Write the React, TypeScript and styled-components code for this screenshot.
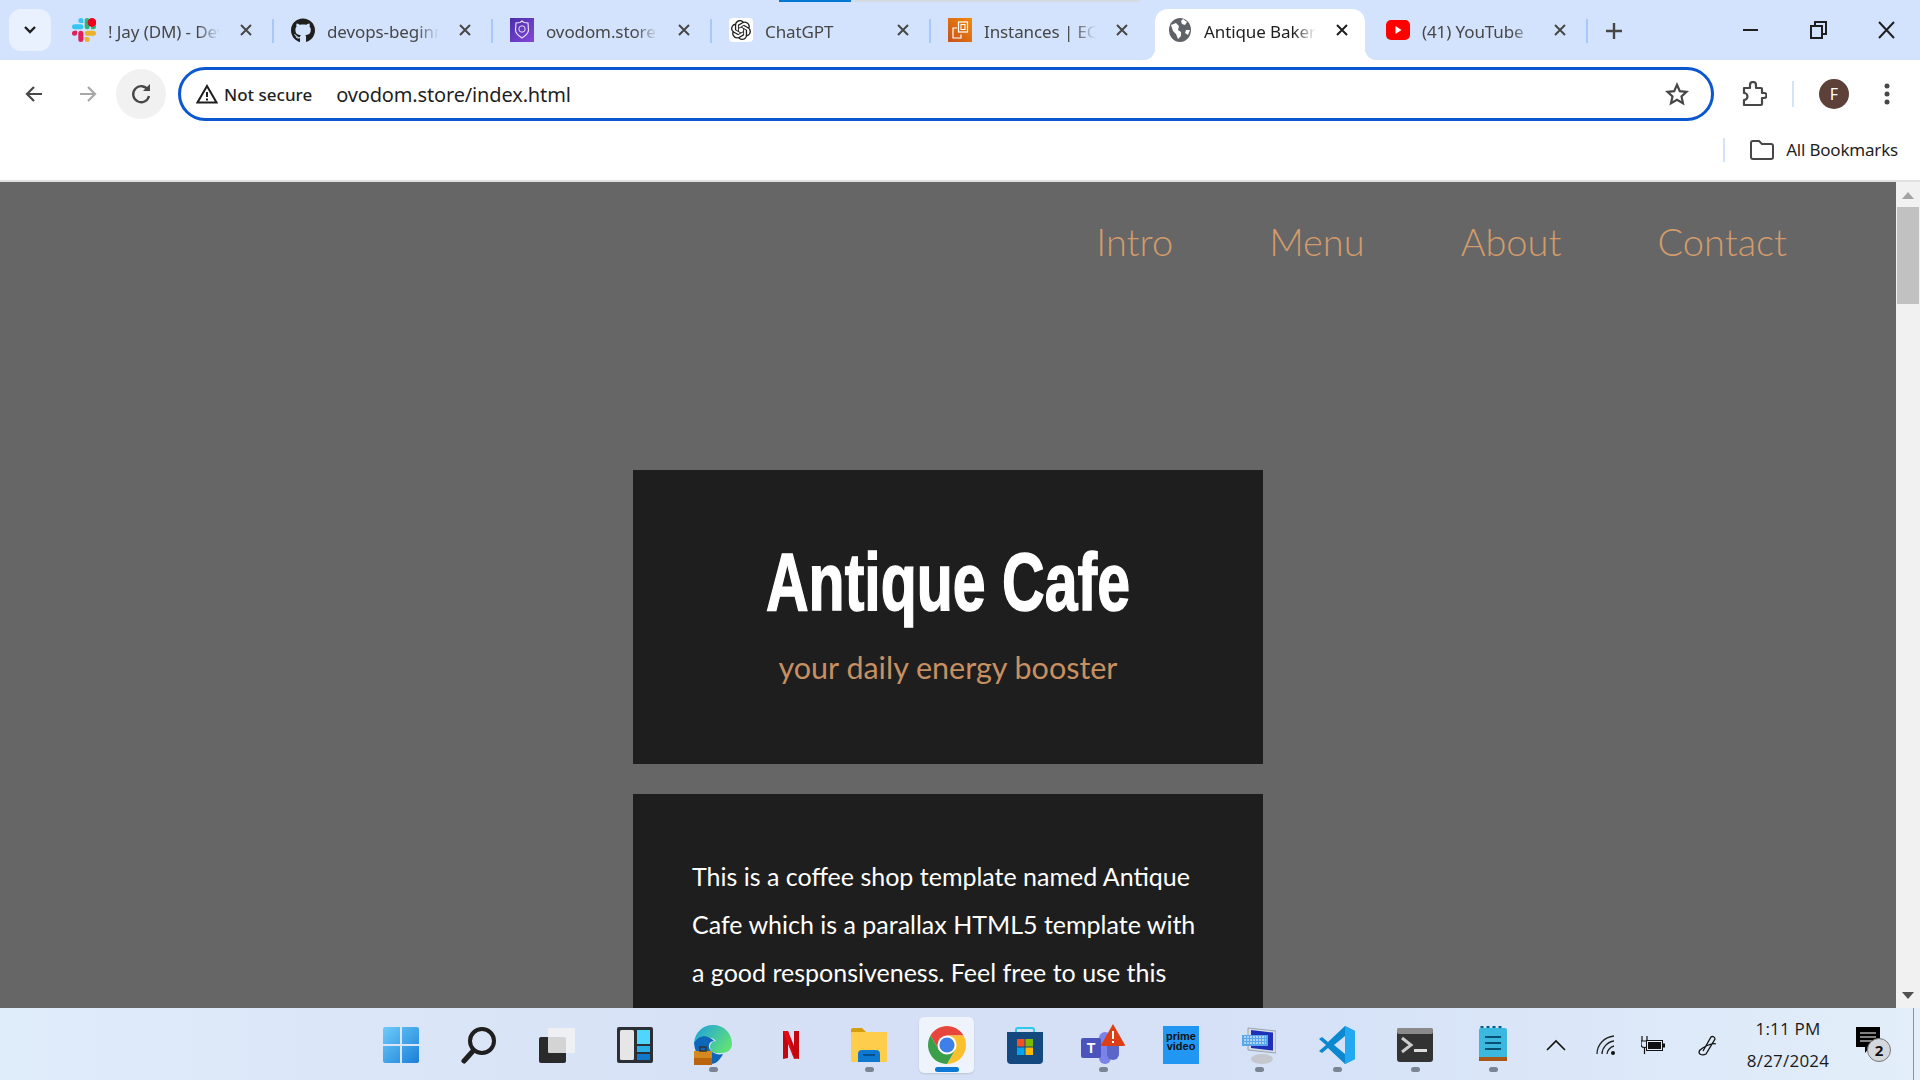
import React from 'react';
import styled, { createGlobalStyle } from 'styled-components';
import { FaGithub } from 'react-icons/fa';
import { SiOpenai } from 'react-icons/si';

const CHROME_FONT = '"Noto Sans", "Open Sans", sans-serif';
const SITE_FONT = 'Lato, "Open Sans", sans-serif';

const GlobalStyle = createGlobalStyle`
    html, body {
        margin: 0;
        height: 100%;
        overflow: hidden;
    }
    #root {
        height: 100%;
    }
`;

const Screen = styled.div`
    width: 1920px;
    height: 1080px;
    display: flex;
    flex-direction: column;
    font-family: ${CHROME_FONT};
    overflow: hidden;
    position: relative;
`;

const LoadStrip = styled.div`
    position: absolute;
    top: 0;
    left: 779px;
    width: 361px;
    height: 2px;
    background: linear-gradient(to right, #0078d4 72px, #d6dbe3 72px);
`;

const TabStrip = styled.div`
    height: 60px;
    flex: none;
    background: #d3e3fd;
    display: flex;
    align-items: flex-end;
    padding-left: 9px;
    box-sizing: border-box;
`;

const TabSearch = styled.button`
    width: 42px;
    height: 42px;
    margin: 0 4px 9px 0;
    padding: 0;
    border: 0;
    border-radius: 12px;
    background: #e9f1fe;
    display: flex;
    align-items: center;
    justify-content: center;
`;

const Tab = styled.div<{ $noSep?: boolean }>`
    width: 219px;
    height: 51px;
    flex: none;
    box-sizing: border-box;
    padding: 0 0 9px 17px;
    display: flex;
    align-items: center;
    position: relative;
    ${p =>
        !p.$noSep &&
        `&::after {
            content: '';
            position: absolute;
            right: 0;
            top: 10px;
            width: 2px;
            height: 24px;
            background: #a8c7fa;
        }`}
`;

const ActiveTab = styled(Tab)`
    width: 210px;
    margin: 0 4px 0 5px;
    padding-left: 13px;
    background: #fff;
    border-radius: 13px 13px 0 0;
    &::before,
    &::after {
        content: '';
        position: absolute;
        bottom: 0;
        width: 12px;
        height: 12px;
    }
    &::before {
        left: -12px;
        background: radial-gradient(circle at 0 0, transparent 12px, #fff 12.5px);
    }
    &::after {
        right: -12px;
        background: radial-gradient(circle at 100% 0, transparent 12px, #fff 12.5px);
    }
`;

const TabIcon = styled.span`
    width: 24px;
    height: 24px;
    flex: none;
    display: flex;
    align-items: center;
    justify-content: center;
    margin-right: 12px;
`;

const TabTitle = styled.span<{ $active?: boolean }>`
    width: 112px;
    flex: none;
    white-space: nowrap;
    overflow: hidden;
    font-size: 17px;
    line-height: 24px;
    letter-spacing: -0.1px;
    margin-top: 3px;
    color: ${p => (p.$active ? '#1f1f1f' : '#474747')};
    -webkit-mask-image: linear-gradient(to right, #000 80%, transparent 100%);
    mask-image: linear-gradient(to right, #000 80%, transparent 100%);
`;

const TabClose = styled.svg`
    width: 14px;
    height: 14px;
    margin-left: 19px;
    flex: none;
`;

const NewTab = styled.svg`
    width: 20px;
    height: 20px;
    margin: 0 0 19px 16px;
    flex: none;
`;

const WindowControls = styled.div`
    margin-left: auto;
    display: flex;
    height: 60px;
    align-items: center;
`;

const WindowButton = styled.svg`
    width: 68px;
    height: 20px;
    margin-bottom: 1px;
`;

const ToolbarArea = styled.div`
    background: #fff;
    flex: none;
    border-radius: 9px 9px 0 0;
    position: relative;
`;

const Toolbar = styled.div`
    height: 61px;
    display: flex;
    align-items: center;
    padding: 7px 0 0 24px;
    box-sizing: border-box;
`;

const NavArrow = styled.svg`
    width: 20px;
    height: 20px;
    flex: none;
    margin-right: 34px;
`;

const ReloadButton = styled.div`
    width: 50px;
    height: 50px;
    margin: 0 12px 0 -16px;
    flex: none;
    border-radius: 50%;
    background: #f1f1f1;
    display: flex;
    align-items: center;
    justify-content: center;
`;

const Omnibox = styled.div`
    width: 1536px;
    height: 54px;
    box-sizing: border-box;
    flex: none;
    border: 3px solid #0b57d0;
    border-radius: 27px;
    display: flex;
    align-items: center;
    padding: 0 22px 0 15px;
`;

const NotSecure = styled.span`
    font-size: 17px;
    font-weight: 500;
    color: #1f1f1f;
    margin-left: 6px;
`;

const UrlText = styled.span`
    font-size: 20px;
    color: #1f1f1f;
    margin-left: 24px;
    letter-spacing: -0.15px;
`;

const StarIcon = styled.svg`
    width: 24px;
    height: 24px;
    margin-left: auto;
`;

const ExtensionIcon = styled.svg`
    width: 26px;
    height: 26px;
    margin-left: 27px;
    flex: none;
`;

const ToolbarSep = styled.div`
    width: 2px;
    height: 26px;
    background: #d3e3fd;
    margin: 0 25px 0 25px;
    flex: none;
`;

const Avatar = styled.div`
    width: 30px;
    height: 30px;
    border-radius: 50%;
    background: #5d4037;
    color: #fff;
    font-size: 16px;
    display: flex;
    align-items: center;
    justify-content: center;
    flex: none;
`;

const MenuDots = styled.svg`
    width: 6px;
    height: 22px;
    margin-left: 35px;
    flex: none;
`;

const BookmarksBar = styled.div`
    height: 61px;
    display: flex;
    align-items: center;
    justify-content: flex-end;
    padding: 0 22px 2px 0;
    box-sizing: border-box;
    border-bottom: 2px solid #e1e1e1;
`;

const BookmarkSep = styled.div`
    width: 2px;
    height: 24px;
    background: #d3e3fd;
    margin-right: 25px;
`;

const BookmarkLabel = styled.span`
    font-size: 17px;
    color: #1f1f1f;
    margin-left: 12px;
    letter-spacing: -0.2px;
`;

const Viewport = styled.div`
    flex: 1;
    min-height: 0;
    display: flex;
`;

const Page = styled.main`
    flex: 1;
    background: #666;
    overflow: hidden;
`;

const SiteNav = styled.nav`
    display: flex;
    justify-content: flex-end;
    gap: 96px;
    padding: 32px 109px 0 0;
`;

const SiteNavLink = styled.a`
    font-family: ${SITE_FONT};
    font-weight: 300;
    font-size: 38px;
    line-height: 54px;
    color: #d29b6c;
`;

const Hero = styled.section`
    width: 630px;
    height: 294px;
    margin: 202px auto 30px;
    background: #1e1e1e;
    text-align: center;
    box-sizing: border-box;
    padding-top: 67px;
`;

const HeroTitle = styled.h1`
    margin: 0;
    font-family: "Liberation Sans", sans-serif;
    font-weight: 700;
    font-size: 82px;
    line-height: 90px;
    color: #fff;
    -webkit-text-stroke: 1.5px #fff;
    transform: scaleX(0.72);
`;

const HeroTagline = styled.p`
    margin: 20px 0 0;
    font-family: ${SITE_FONT};
    font-weight: 400;
    font-size: 30.5px;
    line-height: 40px;
    color: #c79063;
`;

const Intro = styled.section`
    width: 630px;
    margin: 0 auto;
    background: #1e1e1e;
    box-sizing: border-box;
    padding: 58px 50px 60px 59px;
`;

const IntroText = styled.p`
    margin: 0;
    font-family: ${SITE_FONT};
    font-weight: 400;
    font-size: 25px;
    line-height: 48px;
    color: #fff;
`;

const Scrollbar = styled.div`
    width: 24px;
    flex: none;
    background: #f1f1f1;
    display: flex;
    flex-direction: column;
    align-items: center;
`;

const ScrollArrow = styled.div<{ $down?: boolean }>`
    width: 0;
    height: 0;
    margin-top: ${p => (p.$down ? 'auto' : '10px')};
    margin-bottom: ${p => (p.$down ? '9px' : '0')};
    border-left: 6px solid transparent;
    border-right: 6px solid transparent;
    ${p => (p.$down ? 'border-top: 7px solid #505050;' : 'border-bottom: 7px solid #a3a3a3;')}
`;

const ScrollThumb = styled.div`
    width: 22px;
    height: 97px;
    margin-top: 8px;
    background: #c1c1c1;
`;

const Taskbar = styled.footer`
    height: 72px;
    flex: none;
    background: linear-gradient(to right, #dfecfa 0%, #d5dff5 45%, #d6e2f7 70%, #e3eefa 100%);
    display: flex;
    align-items: center;
    padding: 2px 0 0 362px;
    box-sizing: border-box;
    position: relative;
`;

const TaskSlot = styled.div<{ $dot?: boolean; $active?: boolean }>`
    width: 78px;
    height: 56px;
    flex: none;
    display: flex;
    align-items: center;
    justify-content: center;
    position: relative;
    ${p =>
        p.$active &&
        `&::before {
            content: '';
            position: absolute;
            left: 11px;
            right: 12px;
            top: 0;
            bottom: 0;
            background: #eef3fc;
            border-radius: 5px;
            box-shadow: 0 1px 2px rgba(0, 0, 0, 0.12);
        }
        &::after {
            content: '';
            position: absolute;
            left: 27px;
            width: 24px;
            bottom: 1px;
            height: 5px;
            border-radius: 3px;
            background: #0a78d4;
        }`}
    ${p =>
        p.$dot &&
        `&::after {
            content: '';
            position: absolute;
            left: 35px;
            width: 9px;
            bottom: 1px;
            height: 5px;
            border-radius: 3px;
            background: #7b8494;
        }`}
    & > svg {
        position: relative;
    }
`;

const Tray = styled.div`
    display: flex;
    align-items: center;
    margin-left: 14px;
    height: 100%;
`;

const TrayIcon = styled.svg<{ $gap: number }>`
    flex: none;
    margin-right: ${p => p.$gap}px;
`;

const Clock = styled.div`
    width: 124px;
    text-align: center;
    font-size: 17px;
    line-height: 32px;
    color: #1a1a1a;
    letter-spacing: 0.2px;
    font-family: "Open Sans", sans-serif;
    flex: none;
`;

const Notification = styled.div`
    position: relative;
    width: 24px;
    height: 36px;
    margin-left: 6px;
`;

const NotifyBadge = styled.span`
    position: absolute;
    left: 11px;
    top: 11px;
    width: 24px;
    height: 24px;
    box-sizing: border-box;
    border-radius: 50%;
    background: #d4d7db;
    border: 1px solid #777;
    color: #111;
    font-size: 15px;
    font-weight: 700;
    line-height: 22px;
    text-align: center;
`;

const ShowDesktop = styled.div`
    position: absolute;
    right: 6px;
    top: 0;
    bottom: 0;
    width: 1px;
    background: #8b939f;
`;

const PrimeBox = styled.div`
    width: 36px;
    height: 38px;
    background: #2196f3;
    color: #111;
    font-family: "Liberation Sans", sans-serif;
    font-weight: 700;
    font-size: 11px;
    line-height: 10px;
    text-align: center;
    padding-top: 5px;
    box-sizing: border-box;
`;

const ChatGptIcon = styled.span`
    width: 24px;
    height: 24px;
    background: #fff;
    border-radius: 4px;
    display: flex;
    align-items: center;
    justify-content: center;
`;

const SlackIcon = () => (
    <svg width="24" height="24" viewBox="0 0 24 24">
        <path
            fill="#E01E5A"
            d="M5.042 15.165a2.528 2.528 0 0 1-2.52 2.523A2.528 2.528 0 0 1 0 15.165a2.527 2.527 0 0 1 2.522-2.52h2.52v2.52zM6.313 15.165a2.527 2.527 0 0 1 2.521-2.52 2.527 2.527 0 0 1 2.521 2.52v6.313A2.528 2.528 0 0 1 8.834 24a2.528 2.528 0 0 1-2.521-2.522v-6.313z"
        />
        <path
            fill="#36C5F0"
            d="M8.834 5.042a2.528 2.528 0 0 1-2.521-2.52A2.528 2.528 0 0 1 8.834 0a2.528 2.528 0 0 1 2.521 2.522v2.52H8.834zM8.834 6.313a2.528 2.528 0 0 1 2.521 2.521 2.528 2.528 0 0 1-2.521 2.521H2.522A2.528 2.528 0 0 1 0 8.834a2.528 2.528 0 0 1 2.522-2.521h6.312z"
        />
        <path
            fill="#2EB67D"
            d="M18.956 8.834a2.528 2.528 0 0 1 2.522-2.521A2.528 2.528 0 0 1 24 8.834a2.528 2.528 0 0 1-2.522 2.521h-2.522V8.834zM17.688 8.834a2.528 2.528 0 0 1-2.523 2.521 2.527 2.527 0 0 1-2.52-2.521V2.522A2.527 2.527 0 0 1 15.165 0a2.528 2.528 0 0 1 2.523 2.522v6.312z"
        />
        <path
            fill="#ECB22E"
            d="M15.165 18.956a2.528 2.528 0 0 1 2.523 2.522A2.528 2.528 0 0 1 15.165 24a2.527 2.527 0 0 1-2.52-2.522v-2.522h2.52zM15.165 17.688a2.527 2.527 0 0 1-2.52-2.523 2.526 2.526 0 0 1 2.52-2.52h6.313A2.527 2.527 0 0 1 24 15.165a2.528 2.528 0 0 1-2.522 2.523h-6.313z"
        />
        <circle cx="20" cy="4.5" r="4.4" fill="#f0001c" />
    </svg>
);

const VpnIcon = () => (
    <svg width="24" height="24" viewBox="0 0 24 24">
        <defs>
            <linearGradient id="vpn" x1="0" y1="0" x2="1" y2="1">
                <stop offset="0" stopColor="#4a2fa8" />
                <stop offset="1" stopColor="#8446d8" />
            </linearGradient>
        </defs>
        <rect width="24" height="24" fill="url(#vpn)" />
        <path d="M12 3l2 1.500 4 .5 .5 7c0 4-3.500 6-6.500 8-3-2-6.500-4-6.500-8l.5-7 4-.5z" fill="none" stroke="#e9e0ff" strokeWidth="1.2" />
        <circle cx="12" cy="11" r="3.200" fill="none" stroke="#e9e0ff" strokeWidth="1" />
    </svg>
);

const Ec2Icon = () => (
    <svg width="24" height="24" viewBox="0 0 24 24">
        <defs>
            <linearGradient id="ec2" x1="0" y1="1" x2="1" y2="0">
                <stop offset="0" stopColor="#c8511b" />
                <stop offset="1" stopColor="#f08a0c" />
            </linearGradient>
        </defs>
        <rect width="24" height="24" fill="url(#ec2)" />
        <rect x="10.500" y="4" width="9" height="10" fill="none" stroke="#fff" strokeWidth="1.200" />
        <rect x="13" y="6.500" width="4" height="5" fill="none" stroke="#fff" strokeWidth="1" />
        <path d="M9 10H5v10h8v-3.500" fill="none" stroke="#fff" strokeWidth="1.200" />
    </svg>
);

const GlobeIcon = () => (
    <svg width="22" height="24" viewBox="0 0 22 24">
        <ellipse cx="11" cy="12" rx="11" ry="12" fill="#5f6368" />
        <path d="M2 7l5-2 3 3-1 4 3 2v4l-3 3-2-5-3-3zM14 1l4 3-2 3-3-1-1-3zM21 12l-2 5-3-2 1-3z" fill="#fff" />
    </svg>
);

const YouTubeIcon = () => (
    <svg width="24" height="20" viewBox="0 0 24 20">
        <rect width="24" height="20" rx="5" fill="#f00" />
        <path d="M9.500 6l6 4-6 4z" fill="#fff" />
    </svg>
);

const CloseGlyph = ({ color = '#474747' }: { color?: string }) => (
    <TabClose viewBox="0 0 14 14">
        <path d="M2 2l10 10M12 2L2 12" stroke={color} strokeWidth="2" fill="none" />
    </TabClose>
);

const WindowsIcon = () => (
    <svg width="36" height="36" viewBox="0 0 36 36">
        <defs>
            <linearGradient id="win" x1="0" y1="0" x2="1" y2="1">
                <stop offset="0" stopColor="#6ecbfa" />
                <stop offset="1" stopColor="#1a80d8" />
            </linearGradient>
        </defs>
        <path
            fill="url(#win)"
            d="M2 0h15v17H0V2a2 2 0 0 1 2-2zM19 0h15a2 2 0 0 1 2 2v15H19zM0 19h17v17H2a2 2 0 0 1-2-2zM19 19h17v15a2 2 0 0 1-2 2H19z"
        />
    </svg>
);

const SearchIcon = () => (
    <svg width="36" height="38" viewBox="0 0 36 38">
        <circle cx="21" cy="15" r="12" fill="none" stroke="#1f1f1f" strokeWidth="4" />
        <path d="M12 25L3 35" stroke="#1f1f1f" strokeWidth="5" strokeLinecap="round" />
    </svg>
);

const TaskViewIcon = () => (
    <svg width="36" height="36" viewBox="0 0 36 36">
        <rect x="0" y="10" width="27" height="26" rx="2" fill="#2a2a2a" />
        <rect x="9" y="1" width="27" height="25" rx="1" fill="#f2f2f2" fillOpacity="0.85" />
    </svg>
);

const WidgetsIcon = () => (
    <svg width="36" height="36" viewBox="0 0 36 36">
        <rect width="36" height="36" rx="2" fill="#2b2f36" />
        <rect x="3" y="3" width="14" height="30" rx="1.500" fill="#e6e6e6" />
        <rect x="20" y="3" width="13" height="14" fill="#4fd6ff" />
        <rect x="20" y="19" width="13" height="6" fill="#29b0e8" />
        <rect x="20" y="27" width="13" height="6" fill="#0f78cc" />
    </svg>
);

const EdgeIcon = () => (
    <svg width="38" height="40" viewBox="0 0 38 40">
        <defs>
            <linearGradient id="edge" x1="0" y1="0" x2="1" y2="0.600">
                <stop offset="0" stopColor="#1b9de2" />
                <stop offset="1" stopColor="#5fe07a" />
            </linearGradient>
        </defs>
        <path d="M0 18C1 7 9 0 19 0c11 0 19 8 19 19 0 5-4 9-10 9h-6c-4 0-6-3-6-6s2-6 6-6c-2-3-6-4-9-3-6 1-11 4-13 5z" fill="url(#edge)" />
        <path d="M0 18c3-5 9-8 14-6 3 1 5 3 6 4-5 0-7 6-3 10 3 3 8 4 12 3-3 6-7 10-12 10-9 0-16-9-17-21z" fill="#0d66b8" />
        <rect x="0" y="26" width="18" height="14" fill="#b9650f" />
        <rect x="0" y="26" width="18" height="7" fill="#d28a1f" />
        <rect x="6" y="22" width="6" height="4" fill="none" stroke="#333" strokeWidth="1.500" />
    </svg>
);

const NetflixIcon = () => (
    <svg width="16" height="28" viewBox="0 0 16 28">
        <path d="M0 0h5l6 15V0h5v28l-5-1L5 12v15l-5 1z" fill="#c4060f" />
        <path d="M0 0h5l6 27 5 1L11 28z" fill="#e50914" />
    </svg>
);

const ExplorerIcon = () => (
    <svg width="36" height="34" viewBox="0 0 36 34">
        <path d="M0 2a2 2 0 0 1 2-2h9l4 4h21v5H0z" fill="#d69e0a" />
        <rect y="4" width="36" height="30" rx="1" fill="#ffcd4c" />
        <path d="M7 34V26a4 4 0 0 1 4-4h14a4 4 0 0 1 4 4v8z" fill="#0d78d0" />
        <rect x="12" y="26" width="12" height="2" fill="#07508f" />
    </svg>
);

const ChromeIcon = () => (
    <svg width="38" height="38" viewBox="4 4 40 40">
        <path d="M6.680 14A20 20 0 0 1 41.320 14H24L15.340 29z" fill="#e8453c" />
        <path d="M41.320 14A20 20 0 0 1 24 44L32.660 29 24 14z" fill="#fbc02d" />
        <path d="M24 44A20 20 0 0 1 6.680 14L15.340 29H32.660z" fill="#3a9e4a" />
        <circle cx="24" cy="24" r="10" fill="#fff" />
        <circle cx="24" cy="24" r="8" fill="#3f7fe8" />
    </svg>
);

const StoreIcon = () => (
    <svg width="36" height="38" viewBox="0 0 36 38">
        <path d="M9 8V4a2 2 0 0 1 2-2h14a2 2 0 0 1 2 2v4" fill="none" stroke="#2ccbea" strokeWidth="2" />
        <path d="M0 6h36v28a4 4 0 0 1-4 4H4a4 4 0 0 1-4-4z" fill="#14497f" />
        <rect x="10" y="13" width="7.500" height="7.500" fill="#f25022" />
        <rect x="18.500" y="13" width="7.500" height="7.500" fill="#7fba00" />
        <rect x="10" y="21.500" width="7.500" height="7.500" fill="#00a4ef" />
        <rect x="18.500" y="21.500" width="7.500" height="7.500" fill="#ffb900" />
    </svg>
);

const TeamsIcon = () => (
    <svg width="44" height="42" viewBox="0 0 44 42">
        <rect x="18" y="8" width="12" height="32" rx="6" fill="#7b83eb" />
        <rect x="26" y="14" width="12" height="22" rx="6" fill="#5c65c8" />
        <rect x="0" y="14" width="20" height="20" rx="2" fill="#4b53bc" />
        <text x="10" y="29" textAnchor="middle" fontSize="14" fontWeight="700" fill="#fff" fontFamily="Liberation Sans">
            T
        </text>
        <path d="M32 0l12 21a1 1 0 0 1-1 1H21a1 1 0 0 1-1-1z" fill="#dc3e15" />
        <rect x="31" y="7" width="2" height="8" fill="#fff" />
        <rect x="31" y="17" width="2" height="2" fill="#fff" />
    </svg>
);

const MonitorIcon = () => (
    <svg width="34" height="38" viewBox="0 0 34 38">
        <path d="M6 2l28 3v22L6 24z" fill="#d8dde6" stroke="#9aa2b0" />
        <path d="M9 4l22 2.500v18L9 22z" fill="#1f2fb8" />
        <path d="M0 9h26v11H0z" fill="#5aa6ea" />
        <path d="M2 11h22M2 14h22M2 17h22" stroke="#fff" strokeDasharray="2 1" fill="none" />
        <ellipse cx="20" cy="33" rx="11" ry="5" fill="#c4c8ce" />
    </svg>
);

const VsCodeIcon = () => (
    <svg width="36" height="38" viewBox="0 0 36 38">
        <path d="M26 0l10 5v28l-10 5L9 22l-6 5-3-2 7-6-7-6 3-2 6 5z" fill="#0b88d0" />
        <path d="M26 0l10 5v28l-10 5z" fill="#23a9f2" />
        <path d="M26 10v18l-11-9z" fill="#d5dff5" />
    </svg>
);

const TerminalIcon = () => (
    <svg width="36" height="34" viewBox="0 0 36 34">
        <rect width="36" height="34" rx="3" fill="#333" />
        <rect width="36" height="6" rx="2" fill="#8a8a8a" />
        <path d="M5 10l9 7-9 7" fill="none" stroke="#ccc" strokeWidth="3" />
        <rect x="17" y="21" width="13" height="3" fill="#ddd" />
    </svg>
);

const NotepadIcon = () => (
    <svg width="28" height="38" viewBox="0 0 28 38">
        <rect width="28" height="31" y="2" rx="2" fill="#3bb8e0" />
        <rect y="31" width="28" height="4" fill="#a8561a" />
        <path d="M3 2v-2M9 2v-2M15 2v-2M21 2v-2" stroke="#045e84" strokeWidth="3" />
        <path d="M6 11h16M6 17h16M6 23h16" stroke="#07506f" strokeWidth="2" />
    </svg>
);

const tabs = [
    { title: '! Jay (DM) - DevOps', icon: <SlackIcon /> },
    { title: 'devops-beginners', icon: <FaGithub size={25} color="#1f1f1f" /> },
    { title: 'ovodom.store', icon: <VpnIcon /> },
    {
        title: 'ChatGPT',
        icon: (
            <ChatGptIcon>
                <SiOpenai size={20} color="#1f1f1f" />
            </ChatGptIcon>
        ),
    },
    { title: 'Instances | EC2', icon: <Ec2Icon /> },
];

const App = () => (
    <Screen>
        <GlobalStyle />
        <LoadStrip />
        <TabStrip>
            <TabSearch>
                <svg width="14" height="10" viewBox="0 0 14 10">
                    <path d="M2 2l5 5 5-5" fill="none" stroke="#1f1f1f" strokeWidth="2.400" />
                </svg>
            </TabSearch>
            {tabs.map((tab, i) => (
                <Tab key={tab.title} $noSep={i === tabs.length - 1}>
                    <TabIcon>{tab.icon}</TabIcon>
                    <TabTitle>{tab.title}</TabTitle>
                    <CloseGlyph />
                </Tab>
            ))}
            <ActiveTab $noSep>
                <TabIcon>
                    <GlobeIcon />
                </TabIcon>
                <TabTitle $active>Antique Bakery</TabTitle>
                <CloseGlyph color="#1f1f1f" />
            </ActiveTab>
            <Tab>
                <TabIcon>
                    <YouTubeIcon />
                </TabIcon>
                <TabTitle>(41) YouTube</TabTitle>
                <CloseGlyph />
            </Tab>
            <NewTab viewBox="0 0 20 20">
                <path d="M10 2v16M2 10h16" stroke="#474747" strokeWidth="2.400" />
            </NewTab>
            <WindowControls>
                <WindowButton viewBox="0 0 68 20">
                    <path d="M27 10h15" stroke="#1f1f1f" strokeWidth="2" />
                </WindowButton>
                <WindowButton viewBox="0 0 68 20">
                    <path d="M27 6h11v12H27zM31 6V2h11v12h-4" fill="none" stroke="#1f1f1f" strokeWidth="2" />
                </WindowButton>
                <WindowButton viewBox="0 0 68 20">
                    <path d="M27 2l15 16M42 2L27 18" fill="none" stroke="#1f1f1f" strokeWidth="2" />
                </WindowButton>
            </WindowControls>
        </TabStrip>
        <ToolbarArea>
            <Toolbar>
                <NavArrow viewBox="0 0 20 20">
                    <path d="M18 10H3M10 3l-7 7 7 7" fill="none" stroke="#474747" strokeWidth="2.200" />
                </NavArrow>
                <NavArrow viewBox="0 0 20 20">
                    <path d="M2 10h15M10 3l7 7-7 7" fill="none" stroke="#a8a8a8" strokeWidth="2.200" />
                </NavArrow>
                <ReloadButton>
                    <svg width="22" height="22" viewBox="0 0 22 22">
                        <path d="M18 7a8 8 0 1 0 1 6" fill="none" stroke="#474747" strokeWidth="2.300" />
                        <path d="M13 8h7V1z" fill="#474747" />
                    </svg>
                </ReloadButton>
                <Omnibox>
                    <svg width="22" height="20" viewBox="0 0 22 20">
                        <path d="M11 2l9.500 16.500h-19z" fill="none" stroke="#1f1f1f" strokeWidth="2" />
                        <path d="M11 8v5M11 14.500v2" stroke="#1f1f1f" strokeWidth="2" />
                    </svg>
                    <NotSecure>Not secure</NotSecure>
                    <UrlText>ovodom.store/index.html</UrlText>
                    <StarIcon viewBox="0 0 24 24">
                        <path
                            d="M12 2.800l2.800 6.300 6.800.7-5.100 4.600 1.500 6.800-6-3.500-6 3.500 1.500-6.800L2.400 9.800l6.800-.7z"
                            fill="none"
                            stroke="#474747"
                            strokeWidth="2.200"
                        />
                    </StarIcon>
                </Omnibox>
                <ExtensionIcon viewBox="0 0 26 26">
                    <path
                        d="M3 7h6V4a3 3 0 0 1 6 0v3h5a1 1 0 0 1 1 1v4h2a2.500 2.500 0 0 1 0 5h-2v6a1 1 0 0 1-1 1H3v-5a3.500 3.500 0 0 0 0-7z"
                        fill="none"
                        stroke="#474747"
                        strokeWidth="2.200"
                        strokeLinejoin="round"
                    />
                </ExtensionIcon>
                <ToolbarSep />
                <Avatar>F</Avatar>
                <MenuDots viewBox="0 0 6 22">
                    <circle cx="3" cy="3" r="2.500" fill="#474747" />
                    <circle cx="3" cy="11" r="2.500" fill="#474747" />
                    <circle cx="3" cy="19" r="2.500" fill="#474747" />
                </MenuDots>
            </Toolbar>
            <BookmarksBar>
                <BookmarkSep />
                <svg width="24" height="20" viewBox="0 0 24 20">
                    <path
                        d="M1 3a2 2 0 0 1 2-2h6l3 3h9a2 2 0 0 1 2 2v11a2 2 0 0 1-2 2H3a2 2 0 0 1-2-2z"
                        fill="none"
                        stroke="#474747"
                        strokeWidth="2"
                    />
                </svg>
                <BookmarkLabel>All Bookmarks</BookmarkLabel>
            </BookmarksBar>
        </ToolbarArea>
        <Viewport>
            <Page>
                <SiteNav>
                    <SiteNavLink>Intro</SiteNavLink>
                    <SiteNavLink>Menu</SiteNavLink>
                    <SiteNavLink>About</SiteNavLink>
                    <SiteNavLink>Contact</SiteNavLink>
                </SiteNav>
                <Hero>
                    <HeroTitle>Antique Cafe</HeroTitle>
                    <HeroTagline>your daily energy booster</HeroTagline>
                </Hero>
                <Intro>
                    <IntroText>
                        This is a coffee shop template named Antique Cafe which is a parallax HTML5 template with a
                        good responsiveness. Feel free to use this
                    </IntroText>
                </Intro>
            </Page>
            <Scrollbar>
                <ScrollArrow />
                <ScrollThumb />
                <ScrollArrow $down />
            </Scrollbar>
        </Viewport>
        <Taskbar>
            <TaskSlot>
                <WindowsIcon />
            </TaskSlot>
            <TaskSlot>
                <SearchIcon />
            </TaskSlot>
            <TaskSlot>
                <TaskViewIcon />
            </TaskSlot>
            <TaskSlot>
                <WidgetsIcon />
            </TaskSlot>
            <TaskSlot $dot>
                <EdgeIcon />
            </TaskSlot>
            <TaskSlot>
                <NetflixIcon />
            </TaskSlot>
            <TaskSlot $dot>
                <ExplorerIcon />
            </TaskSlot>
            <TaskSlot $active>
                <ChromeIcon />
            </TaskSlot>
            <TaskSlot>
                <StoreIcon />
            </TaskSlot>
            <TaskSlot $dot>
                <TeamsIcon />
            </TaskSlot>
            <TaskSlot>
                <PrimeBox>
                    prime
                    <br />
                    video
                </PrimeBox>
            </TaskSlot>
            <TaskSlot $dot>
                <MonitorIcon />
            </TaskSlot>
            <TaskSlot $dot>
                <VsCodeIcon />
            </TaskSlot>
            <TaskSlot $dot>
                <TerminalIcon />
            </TaskSlot>
            <TaskSlot $dot>
                <NotepadIcon />
            </TaskSlot>
            <Tray>
                <TrayIcon $gap={30} width="20" height="12" viewBox="0 0 20 12">
                    <path d="M1 11l9-9 9 9" fill="none" stroke="#111" strokeWidth="1.600" />
                </TrayIcon>
                <TrayIcon $gap={25} width="20" height="20" viewBox="0 0 20 20">
                    <path d="M1 19C1 10 8 2 18 1M6 19c0-6 5-12 12-13M11 19c0-3 3-7 7-8" fill="none" stroke="#222" strokeWidth="1.300" />
                    <circle cx="17" cy="18" r="2" fill="#111" />
                </TrayIcon>
                <TrayIcon $gap={31} width="24" height="20" viewBox="0 0 24 20">
                    <path d="M1 1v5M6 1v5M0 6h7v3a3 3 0 0 1-7 0zM3.500 12v7" stroke="#111" fill="none" strokeWidth="1.200" />
                    <rect x="5.500" y="5.500" width="16" height="10" fill="#e2edf9" stroke="#111" />
                    <rect x="7" y="7" width="13" height="7" fill="#111" />
                    <rect x="22" y="8.500" width="2" height="4" fill="#111" />
                </TrayIcon>
                <TrayIcon $gap={8} width="22" height="22" viewBox="0 0 22 22">
                    <path d="M7 17L15 3a2.500 2.500 0 0 1 4 2L10 20c-4 2-9 0-6-4 2-2 12-8 16-6" fill="none" stroke="#111" strokeWidth="1.300" />
                </TrayIcon>
                <Clock>
                    1:11 PM
                    <br />
                    8/27/2024
                </Clock>
                <Notification>
                    <svg width="24" height="28" viewBox="0 0 24 28">
                        <path d="M0 0h24v20H14l-5 6v-6H0z" fill="#000" />
                        <path d="M4 6h16M4 10h16M4 14h12" stroke="#fff" strokeWidth="1.200" />
                    </svg>
                    <NotifyBadge>2</NotifyBadge>
                </Notification>
            </Tray>
            <ShowDesktop />
        </Taskbar>
    </Screen>
);

export default App;
